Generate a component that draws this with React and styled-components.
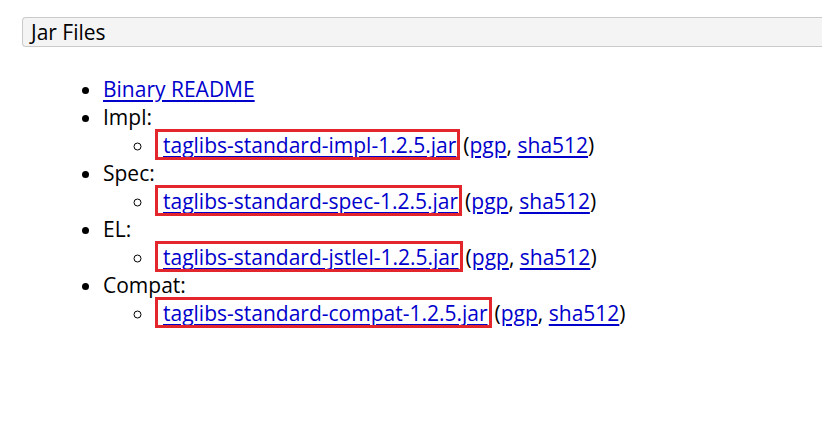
import React from "react";
import styled, { createGlobalStyle } from "styled-components";

const Global = createGlobalStyle`
  html, body { margin: 0; padding: 0; background: #fff; overflow: hidden; }
  body { font-family: "Open Sans", "Noto Sans", sans-serif; color: #000; }
`;

const Page = styled.div`
  padding: 17px 0 40px 22px;
`;

const SectionHeader = styled.h3`
  margin: 0;
  box-sizing: border-box;
  height: 30px;
  width: 820px;
  background: #f4f4f4;
  border: 1px solid #cacaca;
  border-right: none;
  border-radius: 4px 0 0 4px;
  padding: 0 0 0 8px;
  font-size: 21px;
  font-weight: 400;
  line-height: 28px;
`;

const List = styled.ul`
  margin: 28px 0 0 0;
  padding: 0 0 0 81px;
  list-style: disc;
  font-size: 21px;
  line-height: 28px;
`;

const SubList = styled.ul`
  margin: 0;
  padding: 0 0 0 52px;
  list-style: circle;
`;

const Item = styled.li``;

const Link = styled.a`
  color: #0000cc;
  text-decoration: underline;
  text-underline-offset: 3px;
`;

const Marked = styled.span`
  position: relative;
  padding: 0 4px 0 8px;
  margin-right: 3px;
  &::after {
    content: "";
    position: absolute;
    left: 0;
    right: 0;
    top: -2px;
    bottom: -1px;
    border: 3px solid #e3262c;
    pointer-events: none;
  }
`;

const jars = [
  { label: "Impl:", file: "taglibs-standard-impl-1.2.5.jar" },
  { label: "Spec:", file: "taglibs-standard-spec-1.2.5.jar" },
  { label: "EL:", file: "taglibs-standard-jstlel-1.2.5.jar" },
  { label: "Compat:", file: "taglibs-standard-compat-1.2.5.jar" },
];

export default function App() {
  return (
    <>
      <Global />
      <Page>
        <SectionHeader>Jar Files</SectionHeader>
        <List>
          <Item>
            <Link href="#">Binary README</Link>
          </Item>
          {jars.map((j) => (
            <Item key={j.file}>
              {j.label}
              <SubList>
                <Item>
                  <Marked>
                    <Link href="#">{j.file}</Link>
                  </Marked>
                  (<Link href="#">pgp</Link>, <Link href="#">sha512</Link>)
                </Item>
              </SubList>
            </Item>
          ))}
        </List>
      </Page>
    </>
  );
}
